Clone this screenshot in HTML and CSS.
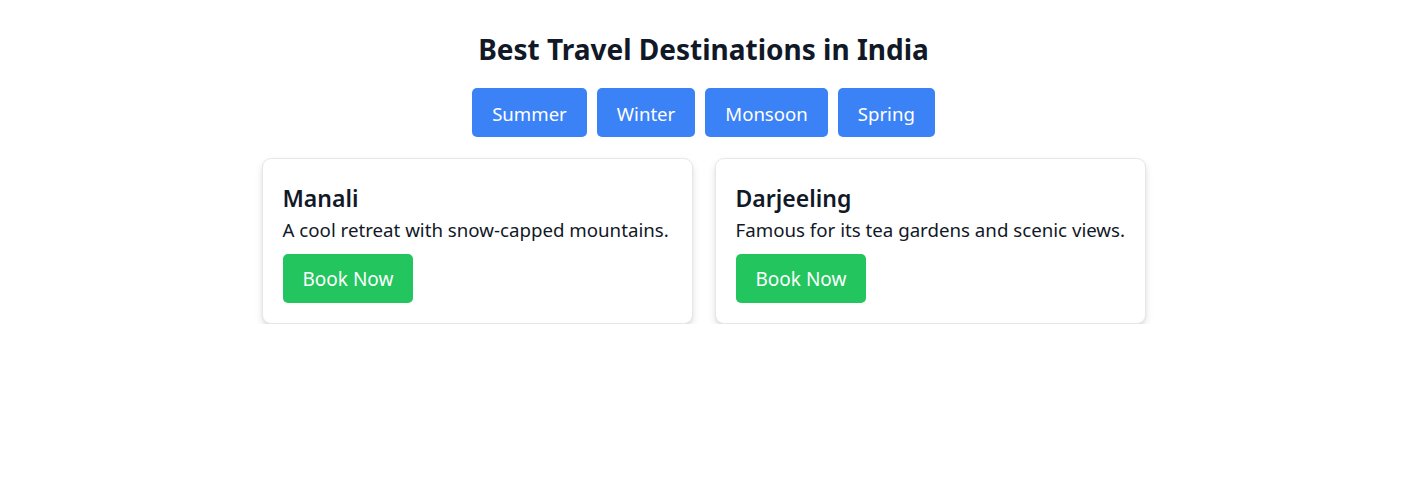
FILE: index.html
```html
<!DOCTYPE html>
<html lang="en">
<head>
<meta charset="utf-8">
<title>Best Travel Destinations in India</title>
<link rel="stylesheet" href="styles.css">
</head>
<body>
<main class="page">
  <h1 class="title">Best Travel Destinations in India</h1>
  <div class="seasons">
    <button class="season-btn">Summer</button>
    <button class="season-btn">Winter</button>
    <button class="season-btn">Monsoon</button>
    <button class="season-btn">Spring</button>
  </div>
  <div class="cards">
    <div class="card">
      <h2 class="card-title">Manali</h2>
      <p class="card-text">A cool retreat with snow-capped mountains.</p>
      <button class="book-btn">Book Now</button>
    </div>
    <div class="card">
      <h2 class="card-title">Darjeeling</h2>
      <p class="card-text">Famous for its tea gardens and scenic views.</p>
      <button class="book-btn">Book Now</button>
    </div>
  </div>
</main>
</body>
</html>
```
FILE: styles.css
```css
* { box-sizing: border-box; }
html, body { margin: 0; padding: 0; background: #fff; }
body {
  font-family: "Noto Sans", "Open Sans", sans-serif;
  color: #111827;
}
.page {
  padding: 31px 0 0 6px;
  display: flex;
  flex-direction: column;
  align-items: center;
}
.title {
  margin: 0 0 21px;
  font-size: 28px;
  line-height: 36px;
  font-weight: 700;
  color: #111827;
}
.seasons {
  display: flex;
  gap: 10px;
  margin-bottom: 21px;
}
.season-btn {
  font-family: inherit;
  font-size: 18.6px;
  line-height: 29px;
  padding: 11px 20px 9px;
  border: none;
  border-radius: 5px;
  background: #3b82f6;
  color: #fff;
}
.cards {
  display: flex;
  gap: 22px;
}
.card {
  width: 431px;
  padding: 20px;
  border: 1px solid #e5e7eb;
  border-radius: 9px;
  background: #fff;
  box-shadow: 0 4px 8px -1px rgba(0,0,0,0.14), 0 2px 4px -2px rgba(0,0,0,0.1);
}
.card-title {
  margin: 4px 0 0;
  font-size: 23px;
  line-height: 30px;
  font-weight: 600;
  color: #111827;
}
.card-text {
  margin: 2px 0 10px;
  font-size: 18.7px;
  line-height: 29px;
  white-space: nowrap;
  color: #111827;
}
.book-btn {
  font-family: inherit;
  font-size: 19px;
  line-height: 29px;
  padding: 11px 20px 9px;
  border: none;
  border-radius: 5px;
  background: #22c55e;
  color: #fff;
}
```
